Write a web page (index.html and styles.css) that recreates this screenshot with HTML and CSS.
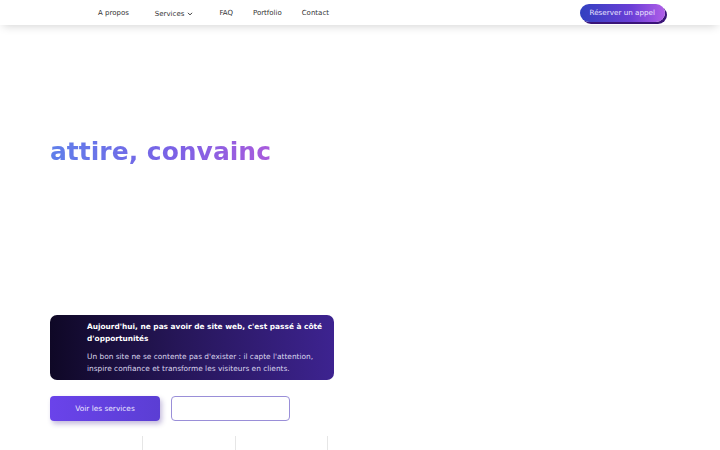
FILE: index.html
```html
<!DOCTYPE html>
<html lang="fr">
  <head>
    <meta charset="utf-8" />
    <meta name="viewport" content="width=device-width, initial-scale=1" />
    <title>Création de sites web</title>
    <link rel="stylesheet" href="styles.css">
  </head>
  <body>
    <header class="site-header">
      <nav class="main-nav">
        <a href="#about">A propos</a>
        <a href="#services" class="has-menu">Services
          <svg class="chevron" viewBox="0 0 10 10" width="6" height="6"><path d="M2 3.5 L5 6.5 L8 3.5" fill="none" stroke="currentColor" stroke-width="1.6" stroke-linecap="round" stroke-linejoin="round"/></svg>
        </a>
        <a href="#faq">FAQ</a>
        <a href="#portfolio">Portfolio</a>
        <a href="#contact">Contact</a>
      </nav>
      <a href="#contact" class="cta-call">Réserver un appel</a>
    </header>

    <main class="hero">
      <h1 class="hero-title"><span class="gradient-text">attire, convainc</span></h1>

      <div class="hero-card">
        <p class="hero-card-title">Aujourd'hui, ne pas avoir de site web, c'est passé à côté d'opportunités</p>
        <p class="hero-card-text">Un bon site ne se contente pas d'exister : il capte l'attention, inspire confiance et transforme les visiteurs en clients.</p>
      </div>

      <div class="hero-actions">
        <a href="#services" class="btn btn-primary">Voir les services</a>
        <a href="#portfolio" class="btn btn-outline"></a>
      </div>

      <div class="hero-stats">
        <div class="stat"></div>
        <div class="stat"></div>
        <div class="stat"></div>
        <div class="stat"></div>
      </div>
    </main>
  </body>
</html>
```

FILE: styles.css
```css
* {
  margin: 0;
  padding: 0;
  box-sizing: border-box;
}

body {
  font-family: 'DejaVu Sans', Verdana, sans-serif;
  background-color: #ffffff;
  color: #2b2b2b;
  overflow: hidden;
}

a {
  text-decoration: none;
  color: inherit;
}

/* Header */
.site-header {
  height: 25px;
  display: flex;
  align-items: center;
  padding: 0 55px 0 98px;
  background: #ffffff;
  box-shadow: 0 4px 10px -3px rgba(0, 0, 0, 0.18);
}

.main-nav {
  display: flex;
  align-items: center;
  gap: 20px;
  font-size: 7px;
  color: #333333;
}

.main-nav a {
  display: flex;
  align-items: center;
  gap: 3px;
}

.main-nav .has-menu {
  margin-left: 6px;
  margin-right: 6px;
  padding-top: 2px;
}

.chevron {
  margin-top: 1px;
}

.cta-call {
  margin-left: auto;
  padding: 4px 10px 5px;
  font-size: 7.2px;
  color: #ece6ff;
  border-radius: 9px;
  background: linear-gradient(90deg, #3140c0, #6a3fd6 60%, #b05ee8);
  box-shadow: 2px 2px 0 #3a1478;
}

/* Hero */
.hero {
  padding: 0 50px;
}

.hero-title {
  margin-top: 111px;
  font-size: 25px;
  font-weight: bold;
  line-height: 32px;
}

.gradient-text {
  background: linear-gradient(90deg, #5f7fea, #7a62e6 55%, #a95bdc);
  -webkit-background-clip: text;
  background-clip: text;
  color: transparent;
}

.hero-card {
  margin-top: 147px;
  width: 284px;
  height: 65px;
  padding: 6px 2px 0 37px;
  border-radius: 7px;
  background: linear-gradient(90deg, #0f0826, #261658 45%, #3d2390);
  color: #ffffff;
}

.hero-card-title {
  font-size: 7.4px;
  font-weight: bold;
  line-height: 12px;
}

.hero-card-text {
  margin-top: 6px;
  font-size: 7.4px;
  line-height: 12px;
  color: #dcd7ee;
}

.hero-actions {
  display: flex;
  gap: 11px;
  margin-top: 16px;
}

.btn {
  height: 25px;
  border-radius: 4px;
  display: flex;
  align-items: center;
  justify-content: center;
  font-size: 7.4px;
}

.btn-primary {
  width: 110px;
  color: #ece8ff;
  background: linear-gradient(90deg, #6a43ea, #5b3ed4);
  box-shadow: 2px 3px 5px rgba(60, 30, 140, 0.3);
}

.btn-outline {
  width: 119px;
  border: 1px solid #9a8fd8;
  background: #ffffff;
}

.hero-stats {
  display: grid;
  grid-template-columns: repeat(4, 92.3px);
  margin-top: 15px;
  height: 20px;
}

.stat + .stat {
  border-left: 1px solid #e6e6e6;
}
```
